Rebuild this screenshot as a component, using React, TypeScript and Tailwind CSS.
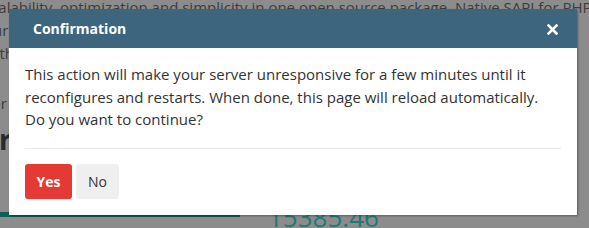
import React from 'react';

const App: React.FC = () => {
  return (
    <div className="relative w-[589px] h-[228px] overflow-hidden bg-[#8c8c8c]" style={{ fontFamily: '"Open Sans", sans-serif' }}>
      {/* page behind the overlay */}
      <div className="text-[15px] leading-[23px] text-[#3c3c3c] -ml-[16px] whitespace-nowrap">
        <p className="-mt-[4px]">scalability, optimization and simplicity in one open source package. Native SAPI for PHP</p>
        <p>our server with an enhanced performance, security and stability bundled into one pr</p>
        <p>with a production ready setup that works out of the box.</p>
      </div>
      <p className="mt-[27px] -ml-[38px] text-[15px] text-[#3c3c3c] whitespace-nowrap">Server</p>
      <p className="mt-[10px] -ml-[33px] text-[28px] font-bold text-[#2a2a2a] leading-none">Ser</p>
      <div className="absolute left-0 top-[212px] w-[240px] h-[5px] bg-[#0f5f5a]" />
      <p className="absolute left-[268px] top-[204px] text-[26px] leading-none text-[#1d7a78]">15385.46</p>

      {/* modal */}
      <div className="absolute left-[9px] top-[9px] w-[568px] bg-white shadow-[1px_1px_2px_rgba(0,0,0,0.35)]">
        <div className="h-[39px] bg-[#3d657d] flex items-center justify-between pl-[24px] pr-[19px]">
          <span className="text-white font-bold text-[14px]">Confirmation</span>
          <svg width="11" height="11" viewBox="0 0 11 11" className="mt-[1px]">
            <path d="M1.5 1.5 L9.5 9.5 M9.5 1.5 L1.5 9.5" stroke="white" strokeWidth="2.6" strokeLinecap="square" />
          </svg>
        </div>
        <div className="px-[16px] pt-[15px]">
          <p className="text-[15px] leading-[22.5px] text-[#333333] pb-[17px] border-b border-[#e8e8e8]">
            This action will make your server unresponsive for a few minutes until it reconfigures and restarts. When done, this page will reload automatically. Do you want to continue?
          </p>
          <div className="flex gap-[4px] pt-[15px] pb-[16px]">
            <button className="w-[47px] h-[35px] rounded-[3px] bg-[#e53935] text-white font-bold text-[14px]">Yes</button>
            <button className="w-[43px] h-[35px] rounded-[3px] bg-[#efefef] text-[#333] text-[14px]">No</button>
          </div>
        </div>
      </div>
    </div>
  );
};

export default App;
